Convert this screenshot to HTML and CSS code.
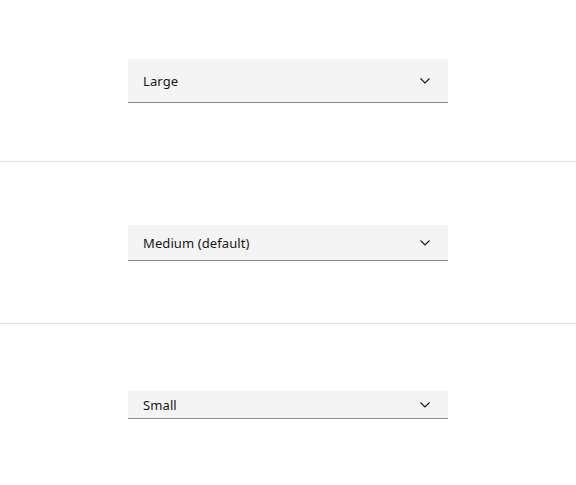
FILE: index.html
```html
<!DOCTYPE html>
<html lang="en">
<head>
<meta charset="utf-8">
<title>Dropdown sizes</title>
<link rel="stylesheet" href="styles.css">
</head>
<body>
  <section class="row">
    <div class="dropdown dropdown--lg">
      <span class="dropdown__label">Large</span>
      <svg class="dropdown__chevron" width="10" height="6" viewBox="0 0 10 6" aria-hidden="true"><path d="M0.5 0.5 L5 5 L9.5 0.5" fill="none" stroke="#161616" stroke-width="1.1"/></svg>
    </div>
  </section>
  <section class="row">
    <div class="dropdown dropdown--md">
      <span class="dropdown__label">Medium (default)</span>
      <svg class="dropdown__chevron" width="10" height="6" viewBox="0 0 10 6" aria-hidden="true"><path d="M0.5 0.5 L5 5 L9.5 0.5" fill="none" stroke="#161616" stroke-width="1.1"/></svg>
    </div>
  </section>
  <section class="row row--last">
    <div class="dropdown dropdown--sm">
      <span class="dropdown__label">Small</span>
      <svg class="dropdown__chevron" width="10" height="6" viewBox="0 0 10 6" aria-hidden="true"><path d="M0.5 0.5 L5 5 L9.5 0.5" fill="none" stroke="#161616" stroke-width="1.1"/></svg>
    </div>
  </section>
</body>
</html>
```
FILE: styles.css
```css
html, body {
  margin: 0;
  padding: 0;
  background: #ffffff;
}
body {
  font-family: "Noto Sans", "Liberation Sans", sans-serif;
  color: #161616;
}
.row {
  height: 161px;
  display: flex;
  align-items: center;
  justify-content: center;
  border-bottom: 1px solid #e0e0e0;
}
.row--last {
  border-bottom: none;
}
.dropdown {
  width: 320px;
  box-sizing: border-box;
  background: #f4f4f4;
  border-bottom: 1px solid #8d8d8d;
  display: flex;
  align-items: center;
  justify-content: space-between;
  padding: 1px 18px 0 15px;
  font-size: 13px;
  letter-spacing: 0.1px;
}
.dropdown--lg { height: 44px; }
.dropdown--md { height: 36px; }
.dropdown--sm { height: 28px; }
.dropdown__label {
  line-height: 18px;
}
.dropdown__chevron {
  display: block;
}
```
